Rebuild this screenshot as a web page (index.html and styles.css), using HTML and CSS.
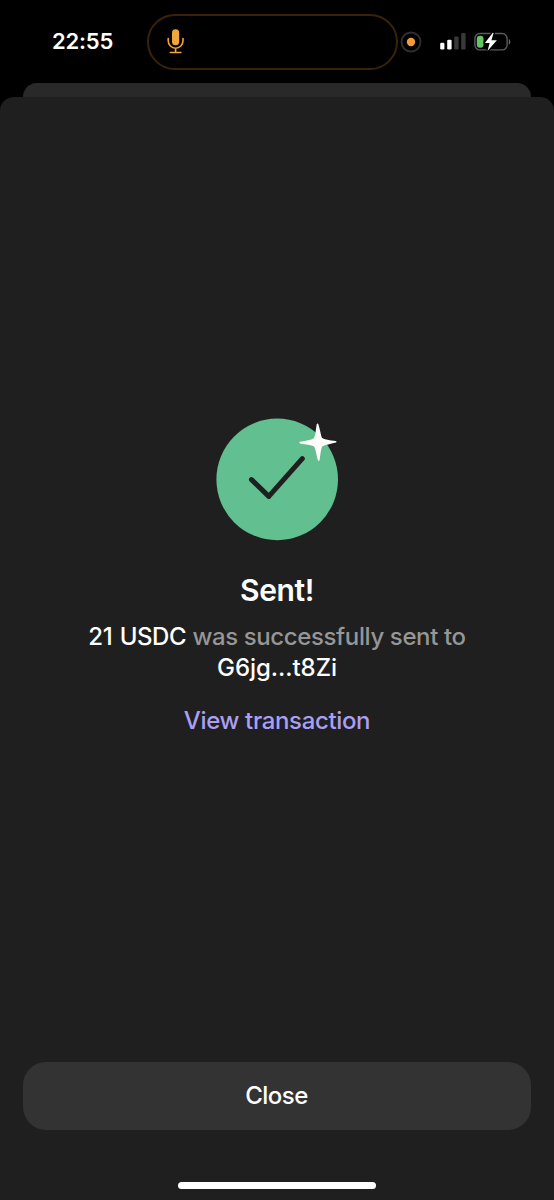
FILE: index.html
```
<!DOCTYPE html>
<html lang="en">
<head>
<meta charset="utf-8">
<title>Sent</title>
<link rel="stylesheet" href="styles.css">
</head>
<body>
<div class="screen">
  <header class="status-bar">
    <time class="clock">22:55</time>
    <div class="island">
      <svg class="mic" width="18" height="28" viewBox="0 0 18 28" fill="none" stroke="#f2a53a">
        <rect x="5" y="1.3" width="7.2" height="16" rx="3.6" fill="#f2a53a" stroke="none"/>
        <path d="M1.2 10.5v2.3a7.400 7.400 0 0 0 14.8 0v-2.3M8.600 20.200v4.200M3.300 24.500h10.600" stroke-width="1.600" stroke-linecap="round"/>
      </svg>
    </div>
    <svg class="recording" width="22" height="22" viewBox="0 0 22 22">
      <circle cx="11" cy="11" r="9.500" fill="none" stroke="#2e2e30" stroke-width="1.900"/>
      <circle cx="11" cy="11" r="4.200" fill="#f29b38"/>
    </svg>
    <svg class="signal" width="27" height="18" viewBox="0 0 27 18">
      <rect x=".2" y="9.800" width="4.200" height="6.600" rx="1.200" fill="#fff"/>
      <rect x="7.200" y="6.800" width="4.400" height="9.600" rx="1.200" fill="#fff"/>
      <rect x="14.200" y="3.600" width="4.400" height="12.800" rx="1.200" fill="#39393b"/>
      <rect x="21.200" y="0" width="4.400" height="16.400" rx="1.200" fill="#39393b"/>
    </svg>
    <svg class="battery" width="38" height="20" viewBox="0 0 38 20">
      <rect x=".9" y="1.500" width="32.200" height="16.400" rx="5" fill="none" stroke="#5b5b5d" stroke-width="1.400"/>
      <path d="M34.800 6.900c2 .8 2 4.800 0 5.600z" fill="#69696b"/>
      <rect x="2.800" y="3.700" width="6.700" height="12" rx="3" fill="#65c466"/>
      <path d="M18.800.8 10.900 10.900h4.700l-2.100 8.200 9.400-10.900h-5.500l2.200-7.200z" fill="#fff" stroke="#000" stroke-width="2.600" stroke-linejoin="round" paint-order="stroke"/>
    </svg>
  </header>
  <div class="sheet-behind"></div>
  <main class="sheet">
    <section class="result">
      <svg class="success" width="122" height="123" viewBox="0 0 122 123">
        <circle cx="61.200" cy="61.400" r="60.800" fill="#61bf90"/>
        <path d="M35.500 61.600 52.800 78.400 86.300 40.700" fill="none" stroke="#1f1f1f" stroke-width="5" stroke-linecap="round" stroke-linejoin="round"/>
        <path transform="rotate(-1 102.300 24)" d="M101 6.200c.4-.8 1.400-.8 1.700 0 1.800 6 2.200 11.100 3.400 13.800 2.500 1.800 8 2.300 13.700 3.200.9.300.9 1.400.1 1.700-5.800 1.500-10.600 2-13.500 3.400-1.800 2.600-2 7.900-3.200 14-.4.800-1.300.8-1.600 0-1.500-5.800-1.900-10.900-3.400-13.700-2.700-2-8.100-2.200-14.200-3.500-.9-.4-.9-1.400 0-1.700 6.100-1.300 11.100-1.500 13.900-3.300 1.800-2.600 2-8 3.100-13.900z" fill="#fffefa"/>
      </svg>
      <h1 class="title">Sent!</h1>
      <p class="message"><span class="amount">21 USDC</span> <span class="description">was successfully sent to</span><br><span class="address">G6jg...t8Zi</span></p>
      <a class="link">View transaction</a>
    </section>
    <button class="close"><span>Close</span></button>
    <div class="home-indicator"></div>
  </main>
</div>
</body>
</html>
```
FILE: styles.css
```
* { box-sizing: border-box; }
body { margin: 0; background: #000; }
.screen {
  width: 554px;
  height: 1200px;
  display: flex;
  flex-direction: column;
  overflow: hidden;
  background: #000;
  color: #fff;
  font-family: Inter, "Liberation Sans", sans-serif;
}
.status-bar {
  height: 83px;
  flex: none;
  display: flex;
  align-items: center;
}
.clock {
  width: 95px;
  margin-left: 52px;
  font-size: 22px;
  font-weight: 600;
  letter-spacing: -0.2px;
  line-height: 83px;
}
.island {
  width: 251px;
  height: 56px;
  display: flex;
  align-items: center;
  padding-left: 18px;
  border: 2px solid #38220c;
  border-radius: 28px;
}
.recording { margin-left: 2px; }
.signal { margin-left: 18px; }
.battery { margin-left: 7px; }
.sheet-behind {
  height: 14px;
  flex: none;
  margin: 0 23px;
  border-radius: 14px 14px 0 0;
  background: #29292a;
}
.sheet {
  flex: 1;
  display: flex;
  flex-direction: column;
  align-items: center;
  border-radius: 14px 14px 0 0;
  background: #1f1f1f;
}
.result {
  flex: 1;
  padding-top: 321px;
  display: flex;
  flex-direction: column;
  align-items: center;
  font-weight: 550;
}
.title {
  margin: 29px 0 0;
  font-size: 30px;
  font-weight: 600;
  letter-spacing: -0.4px;
  line-height: 40px;
}
.message {
  margin: 11px 0 0;
  font-size: 24px;
  line-height: 31px;
  text-align: center;
  white-space: nowrap;
}
.amount {
  letter-spacing: -0.45px;
  word-spacing: 1.5px;
}
.description {
  color: #969696;
  letter-spacing: -0.38px;
}
.address { letter-spacing: -0.05px; }
.link {
  margin-top: 22px;
  font-size: 24px;
  letter-spacing: -0.35px;
  line-height: 32px;
  color: #ab9ff2;
}
.close {
  width: 508px;
  height: 68px;
  border: 0;
  border-radius: 23px;
  background: #333;
  color: #fff;
  font: 550 24px/68px Inter, "Liberation Sans", sans-serif;
  letter-spacing: -0.5px;
  padding: 0 1px 0 0;
}
.home-indicator {
  width: 198px;
  height: 7px;
  margin: 52px 0 11px;
  border-radius: 4px;
  background: #fff;
}
```
